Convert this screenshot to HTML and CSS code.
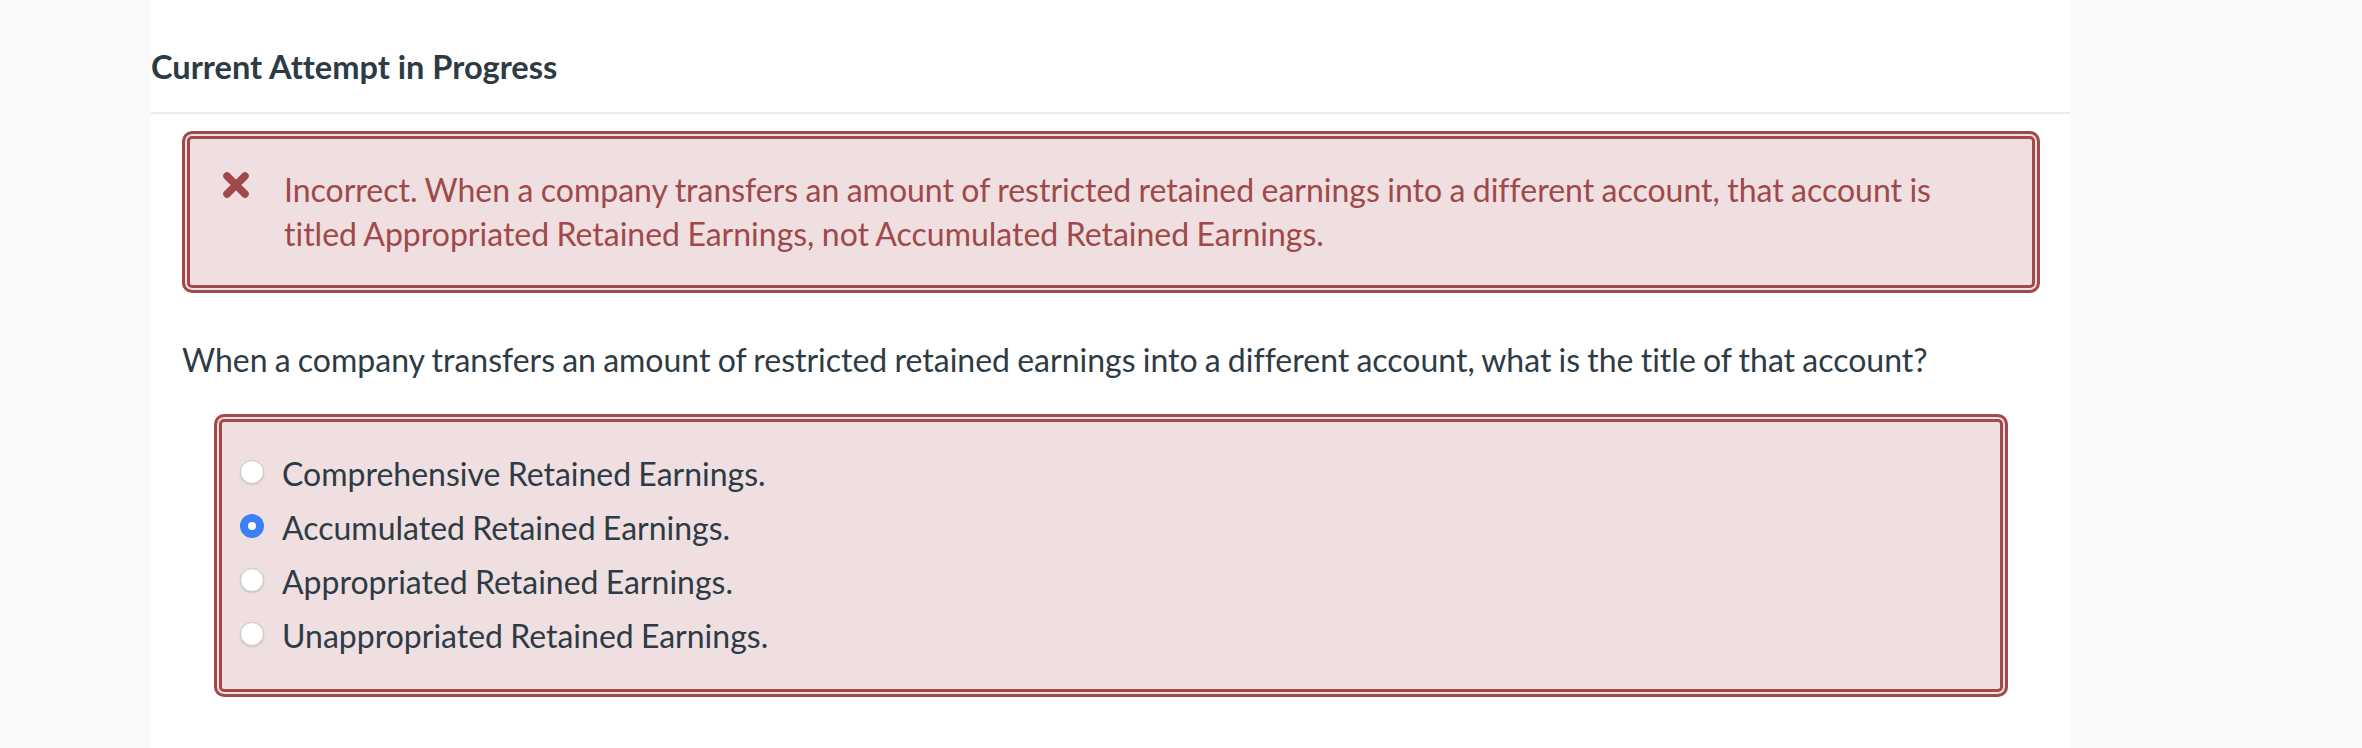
FILE: index.html
```html
<!DOCTYPE html>
<html lang="en">
<head>
  <meta charset="UTF-8" />
  <meta name="viewport" content="width=device-width, initial-scale=1.0"/>
  <title>Current Attempt in Progress</title>
  <link rel="stylesheet" href="styles.css">
</head>
<body>
  <div class="page">
    <!-- Cabeçalho da tentativa -->
    <header class="attempt-header">
      <h2>Current Attempt in Progress</h2>
    </header>

    <div class="question">
      <!-- Feedback de erro -->
      <div class="feedback feedback-error">
        <svg class="feedback-icon" viewBox="0 0 28 28" width="28" height="28" aria-hidden="true">
          <path d="M5 5 L23 23 M23 5 L5 23" stroke="currentColor" stroke-width="7.5" stroke-linecap="round" fill="none"/>
        </svg>
        <p>Incorrect. When a company transfers an amount of restricted retained earnings into a different account, that account is titled Appropriated Retained Earnings, not Accumulated Retained Earnings.</p>
      </div>

      <p class="question-text">When a company transfers an amount of restricted retained earnings into a different account, what is the title of that account?</p>

      <!-- Alternativas -->
      <div class="answers feedback-error">
        <label class="answer">
          <input type="radio" name="resposta" value="1">
          Comprehensive Retained Earnings.
        </label>
        <label class="answer">
          <input type="radio" name="resposta" value="2" checked>
          Accumulated Retained Earnings.
        </label>
        <label class="answer">
          <input type="radio" name="resposta" value="3">
          Appropriated Retained Earnings.
        </label>
        <label class="answer">
          <input type="radio" name="resposta" value="4">
          Unappropriated Retained Earnings.
        </label>
      </div>
    </div>
  </div>
</body>
</html>
```

FILE: styles.css
```css
/* Reset básico */
* {
  margin: 0;
  padding: 0;
  box-sizing: border-box;
}

html, body {
  height: 100%;
}

body {
  font-family: "Lato", "Liberation Sans", sans-serif;
  font-size: 32px;
  font-variant-ligatures: none;
  word-spacing: -1px;
  color: #2d3b45;
  background: #f9f9f9;
}

.page {
  margin-left: 151px;
  width: 1919px;
  min-height: 100%;
  background: #fff;
}

.attempt-header {
  padding: 48px 0 26px;
  border-bottom: 2px solid #ebebeb;
}

.attempt-header h2 {
  font-size: 32.6px;
  font-weight: 700;
  line-height: 38px;
  word-spacing: 0;
}

.question {
  padding: 17px 30px 0 31px;
}

/* Caixa vermelha com borda dupla */
.feedback-error {
  border: 3px solid #a2494b;
  border-radius: 10px;
  background: #efdfe0;
  box-shadow: inset 0 0 0 2px #efdfe0, inset 0 0 0 5px #a2494b;
}

.feedback {
  display: flex;
  align-items: flex-start;
  padding: 34px 40px 34px 37px;
  color: #a0484a;
  line-height: 44px;
  word-spacing: -0.8px;
}

.feedback-icon {
  flex: none;
  margin-top: 3px;
  margin-right: 34px;
}

.question-text {
  margin: 45px 0 32px;
  line-height: 44px;
}

.answers {
  margin: 0 32px;
  padding: 30px 23px 31px;
}

.answer {
  display: flex;
  align-items: center;
  height: 54px;
  line-height: 54px;
}

.answer input {
  appearance: none;
  -webkit-appearance: none;
  flex: none;
  width: 24px;
  height: 24px;
  margin: 0 18px 5px 0;
  border: 1px solid #c6c6c6;
  border-radius: 50%;
  background: #fff;
  box-shadow: 0 1px 2px rgba(0, 0, 0, 0.12);
}

.answer input:checked {
  border: 8px solid #3a82f4;
  box-shadow: none;
}
```
